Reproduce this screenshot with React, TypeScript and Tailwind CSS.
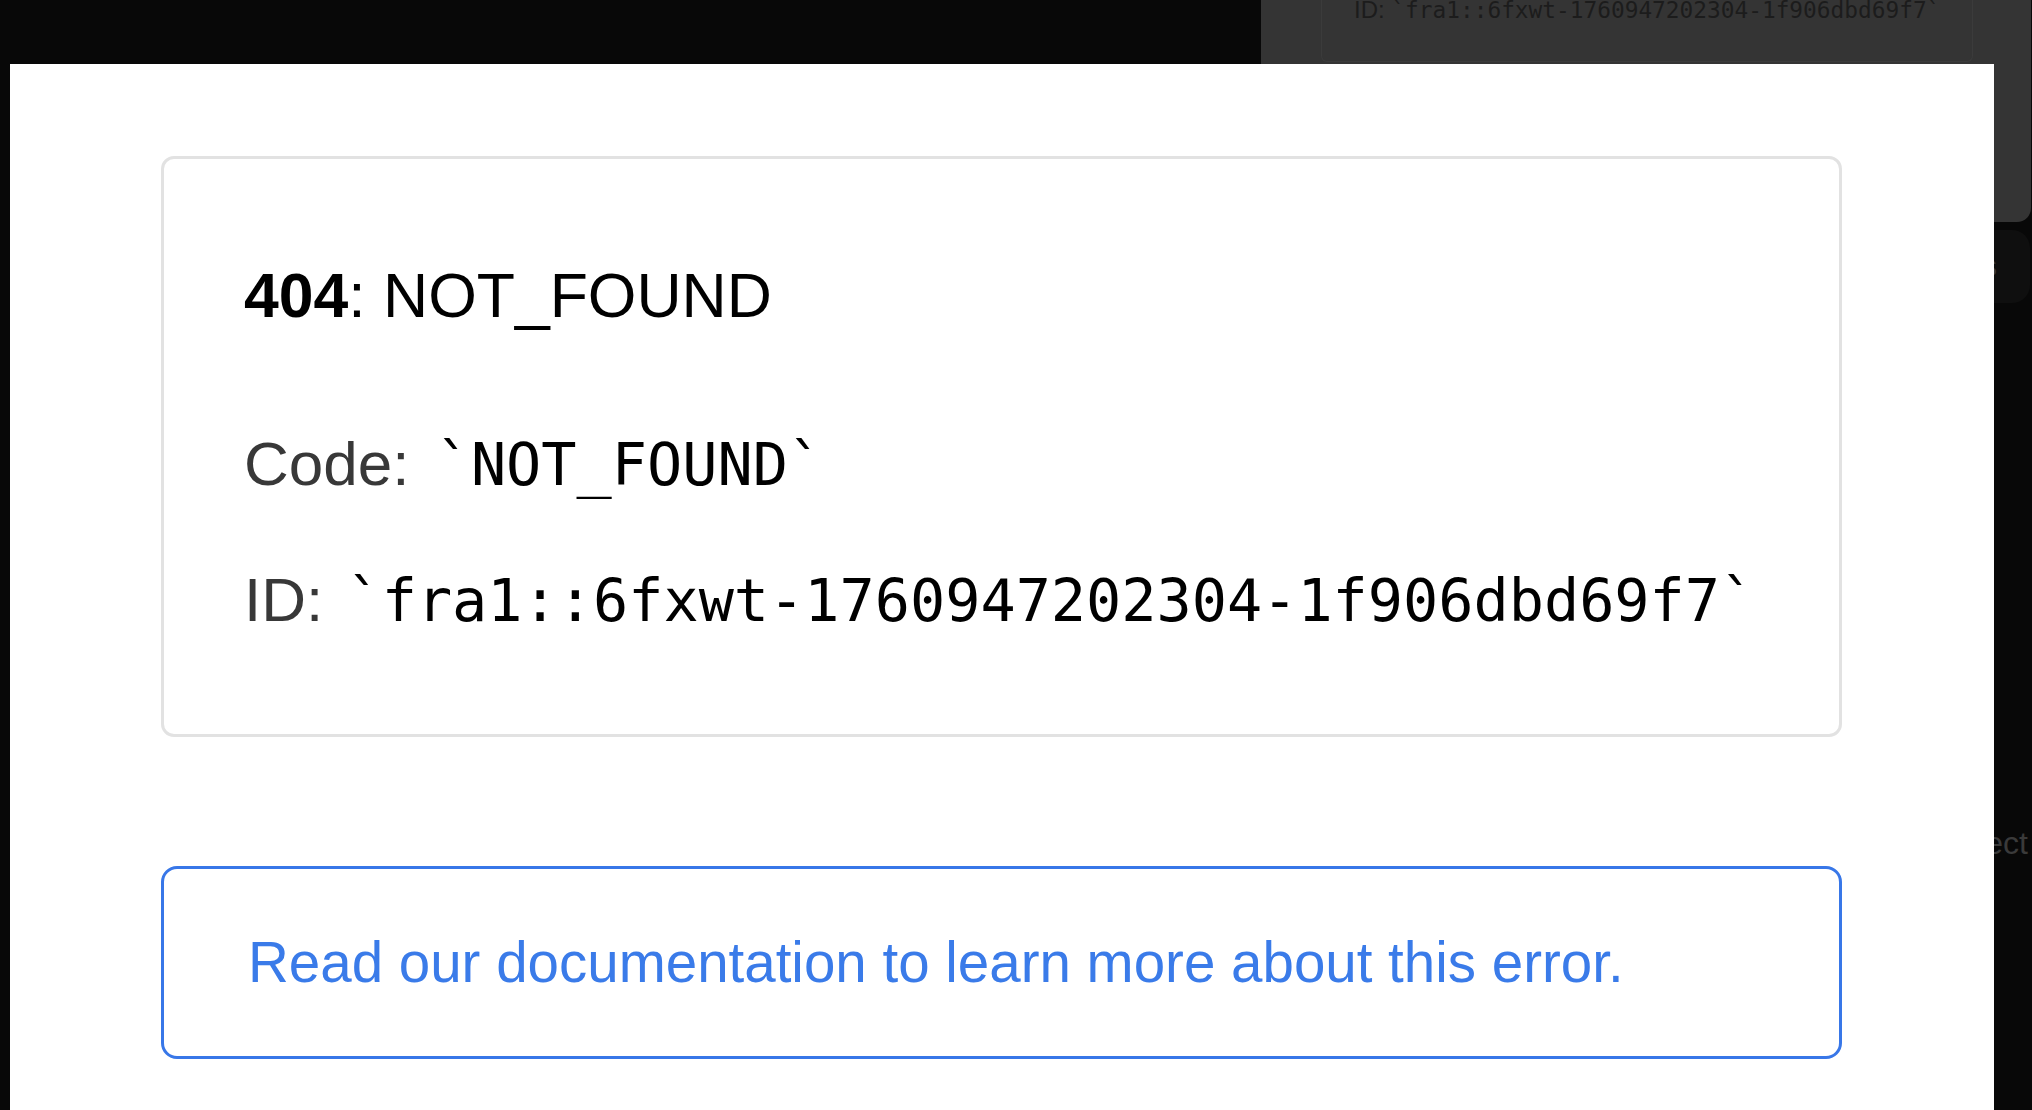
import React from "react";

const sans = "font-['Liberation_Sans',Arial,sans-serif]";
const mono = "font-['DejaVu_Sans_Mono','Liberation_Mono',monospace]";

export default function App() {
  return (
    <div className="relative w-[2032px] h-[1110px] overflow-hidden bg-[#080808]">
      {/* window behind, top right */}
      <div className="absolute left-[1261px] top-0 w-[770px] h-[222px] rounded-b-[14px] bg-[#343434]">
        <div className="ml-[60px] w-[652px] h-[62px] rounded-b-[6px] border border-t-0 border-[#3b3b3b] pl-[32px] overflow-hidden">
          <div className={`${sans} mt-[-4px] text-[24px] leading-[28px] text-[#1c1c1c] whitespace-nowrap`}>
            ID: <span className={`${mono} text-[22.8px]`}>`fra1::6fxwt-1760947202304-1f906dbd69f7`</span>
          </div>
        </div>
      </div>
      <div className="absolute left-[1960px] top-[230px] w-[70px] h-[73px] rounded-[18px] bg-[#0f0f0f]" />
      <span className={`${sans} absolute right-[35px] top-[248px] text-[30px] leading-[36px] text-[#3a3a3a]`}>Logs</span>
      <span className={`${sans} absolute right-[4px] top-[824px] text-[32px] leading-[38px] text-[#3a3a3a]`}>Redirect</span>

      {/* main white panel */}
      <div className="relative z-10 ml-[10px] mt-[64px] flex h-[1046px] w-[1984px] flex-col gap-[129px] bg-white pl-[151px] pr-[152px] pt-[92px]">
        <div className="flex flex-col rounded-[13px] border-[3px] border-[#e2e2e2] pl-[80px] pt-[100px] pb-[97px]">
          <h1 className={`${sans} text-[62.5px] leading-[72px] text-black whitespace-nowrap`}>
            <span className="font-bold">404</span>: NOT_FOUND
          </h1>
          <p className={`${sans} mt-[97px] text-[62px] leading-[72px] text-[#383838] whitespace-nowrap`}>
            Code: <span className={`${mono} ml-[9px] text-[58.5px] text-black`}>`NOT_FOUND`</span>
          </p>
          <p className={`${sans} mt-[63px] text-[62px] leading-[72px] text-[#383838] whitespace-nowrap`}>
            ID: <span className={`${mono} ml-[6px] text-[58.5px] text-black`}>`fra1::6fxwt-1760947202304-1f906dbd69f7`</span>
          </p>
        </div>
        <div className="flex rounded-[16px] border-[3px] border-[#3877e8] pl-[84px] pt-[62px] pb-[61px]">
          <p className={`${sans} text-[56.5px] leading-[64px] text-[#3a7be9] whitespace-nowrap`}>
            Read our documentation to learn more about this error.
          </p>
        </div>
      </div>
    </div>
  );
}
